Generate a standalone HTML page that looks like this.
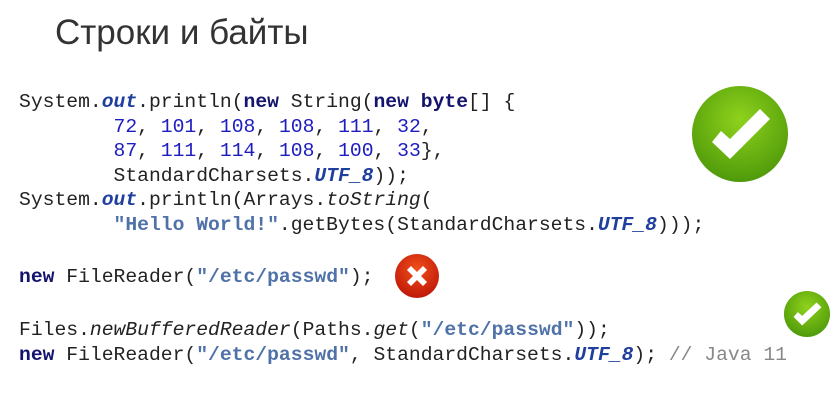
<!DOCTYPE html>
<html><head><meta charset="utf-8"><style>
body{margin:0;width:837px;height:404px;background:#fff;position:relative;overflow:hidden}
.t{position:absolute;left:55px;top:13px;font-family:"Liberation Sans","DejaVu Sans",sans-serif;font-size:35px;color:#333}
.c{position:absolute;left:19px;font-family:"Liberation Mono",monospace;font-size:19.7px;color:#222;white-space:pre;line-height:24.6px}
.k{color:#14146e;font-weight:bold}
.n{color:#1c1cc0}
.f{color:#1f3f9e;font-weight:bold;font-style:italic}
.i{font-style:italic}
.s{color:#4f72a8;font-weight:bold}
.g{color:#888}
svg{position:absolute}
</style></head><body>
<div class="t">Строки и байты</div>
<div class="c" style="top:90px">System.<span class="f">out</span>.println(<span class="k">new</span> String(<span class="k">new</span> <span class="k">byte</span>[] {
        <span class="n">72</span>, <span class="n">101</span>, <span class="n">108</span>, <span class="n">108</span>, <span class="n">111</span>, <span class="n">32</span>,
        <span class="n">87</span>, <span class="n">111</span>, <span class="n">114</span>, <span class="n">108</span>, <span class="n">100</span>, <span class="n">33</span>},
        StandardCharsets.<span class="f">UTF_8</span>));
System.<span class="f">out</span>.println(Arrays.<span class="i">toString</span>(
        <span class="s">"Hello World!"</span>.getBytes(StandardCharsets.<span class="f">UTF_8</span>)));</div>
<div class="c" style="top:265px"><span class="k">new</span> FileReader(<span class="s">"/etc/passwd"</span>);</div>
<div class="c" style="top:318px">Files.<span class="i">newBufferedReader</span>(Paths.<span class="i">get</span>(<span class="s">"/etc/passwd"</span>));
<span class="k">new</span> FileReader(<span class="s">"/etc/passwd"</span>, StandardCharsets.<span class="f">UTF_8</span>); <span class="g">// Java 11</span></div>
<svg style="left:690px;top:84px" width="100" height="100" viewBox="0 0 100 100">
<defs><radialGradient id="g1" cx="50%" cy="35%" r="65%"><stop offset="0" stop-color="#8fd21c"/><stop offset="1" stop-color="#4f9a0a"/></radialGradient></defs>
<circle cx="50" cy="50" r="48" fill="url(#g1)"/>
<path d="M22 58 L40 75 L80 35 L70 25 L40 55 L31 47 Z" fill="#fff"/>
</svg>
<svg style="left:394px;top:253px" width="46" height="46" viewBox="0 0 46 46">
<defs><radialGradient id="g2" cx="50%" cy="35%" r="65%"><stop offset="0" stop-color="#f0501c"/><stop offset="1" stop-color="#c01808"/></radialGradient></defs>
<circle cx="23" cy="23" r="22" fill="url(#g2)"/>
<path d="M13 17 L17 13 L23 19 L29 13 L33 17 L27 23 L33 29 L29 33 L23 27 L17 33 L13 29 L19 23 Z" fill="#fff"/>
</svg>
<svg style="left:783px;top:290px" width="48" height="48" viewBox="0 0 100 100">
<circle cx="50" cy="50" r="48" fill="url(#g1)"/>
<path d="M22 56 L40 74 L80 36 L70 26 L40 54 L31 46 Z" fill="#fff"/>
</svg>
</body></html>
